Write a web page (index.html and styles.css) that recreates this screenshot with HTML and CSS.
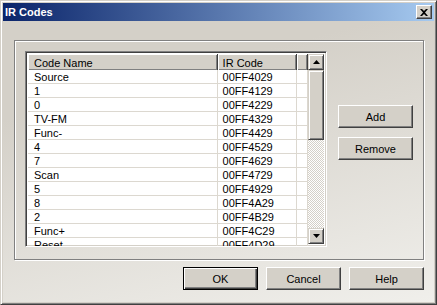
FILE: index.html
```html
<!DOCTYPE html>
<html lang="en">
<head>
    <meta charset="UTF-8">
    <title>IR Codes</title>
    <link rel="stylesheet" href="styles.css">
</head>
<body>
    <div class="window">
        <div class="titlebar">
            <span class="title">IR Codes</span>
            <button class="close" aria-label="Close">
                <svg width="8" height="7" viewBox="0 0 8 7"><path d="M0 0h2l2 2 2-2h2L5 3.5 8 7H6L4 5 2 7H0l3-3.5z" fill="#000"/></svg>
            </button>
        </div>
        <div class="client">
            <div class="frame">
                <div class="listbox">
                    <div class="grid">
                        <div class="head">
                            <div class="hcell c1">Code Name</div>
                            <div class="hcell c2">IR Code</div>
                            <div class="hcell c3"></div>
                        </div>
                        <div class="row"><div class="cell c1">Source</div><div class="cell c2">00FF4029</div><div class="cell c3"></div></div>
                        <div class="row"><div class="cell c1">1</div><div class="cell c2">00FF4129</div><div class="cell c3"></div></div>
                        <div class="row"><div class="cell c1">0</div><div class="cell c2">00FF4229</div><div class="cell c3"></div></div>
                        <div class="row"><div class="cell c1">TV-FM</div><div class="cell c2">00FF4329</div><div class="cell c3"></div></div>
                        <div class="row"><div class="cell c1">Func-</div><div class="cell c2">00FF4429</div><div class="cell c3"></div></div>
                        <div class="row"><div class="cell c1">4</div><div class="cell c2">00FF4529</div><div class="cell c3"></div></div>
                        <div class="row"><div class="cell c1">7</div><div class="cell c2">00FF4629</div><div class="cell c3"></div></div>
                        <div class="row"><div class="cell c1">Scan</div><div class="cell c2">00FF4729</div><div class="cell c3"></div></div>
                        <div class="row"><div class="cell c1">5</div><div class="cell c2">00FF4929</div><div class="cell c3"></div></div>
                        <div class="row"><div class="cell c1">8</div><div class="cell c2">00FF4A29</div><div class="cell c3"></div></div>
                        <div class="row"><div class="cell c1">2</div><div class="cell c2">00FF4B29</div><div class="cell c3"></div></div>
                        <div class="row"><div class="cell c1">Func+</div><div class="cell c2">00FF4C29</div><div class="cell c3"></div></div>
                        <div class="row"><div class="cell c1">Reset</div><div class="cell c2">00FF4D29</div><div class="cell c3"></div></div>
                    </div>
                    <div class="scrollbar">
                        <div class="sbtn">
                            <svg width="7" height="4" viewBox="0 0 7 4"><path d="M3.5 0L7 4H0z" fill="#000"/></svg>
                        </div>
                        <div class="thumb"></div>
                        <div class="track"></div>
                        <div class="sbtn">
                            <svg width="7" height="4" viewBox="0 0 7 4"><path d="M0 0h7L3.5 4z" fill="#000"/></svg>
                        </div>
                    </div>
                </div>
                <div class="side">
                    <button class="btn">Add</button>
                    <button class="btn">Remove</button>
                </div>
            </div>
            <div class="footer">
                <button class="btn default">OK</button>
                <button class="btn">Cancel</button>
                <button class="btn">Help</button>
            </div>
        </div>
    </div>
</body>
</html>
```

FILE: styles.css
```css
body {
    margin: 0;
    font-family: 'Liberation Sans', Arial, sans-serif;
    font-size: 11px;
    color: #000;
    background: #d4d0c8;
}
.window {
    width: 437px;
    height: 305px;
    box-sizing: border-box;
    border: 1px solid;
    border-color: #d4d0c8 #404040 #404040 #d4d0c8;
    box-shadow: inset 1px 1px #fff, inset -1px -1px #808080;
    padding: 2px 2px 2px 2px;
    display: flex;
    flex-direction: column;
}
.titlebar {
    height: 18px;
    background: linear-gradient(to right, #0a246a, #a6caf0);
    display: flex;
    align-items: center;
    justify-content: space-between;
    padding: 0 2px 0 2px;
}
.title {
    color: #fff;
    font-weight: bold;
    font-size: 11px;
}
.close {
    width: 16px;
    height: 14px;
    padding: 0;
    box-sizing: border-box;
    background: #d4d0c8;
    border: 1px solid;
    border-color: #fff #404040 #404040 #fff;
    box-shadow: inset -1px -1px #808080;
    display: flex;
    align-items: center;
    justify-content: center;
}
.client {
    flex: 1;
    background: linear-gradient(165deg, #d4d0c8 25%, #f0efeb 100%);
    padding: 19px 10px 0 11px;
}
.frame {
    height: 220px;
    box-sizing: border-box;
    border: 1px solid #808080;
    box-shadow: inset 1px 1px #fff, 1px 1px #fff;
    padding: 10px 9px 0 10px;
    display: flex;
}
.listbox {
    width: 302px;
    height: 196px;
    box-sizing: border-box;
    border: 1px solid;
    border-color: #808080 #fff #fff #808080;
    box-shadow: inset 1px 1px #404040, inset -1px -1px #d4d0c8;
    padding: 2px;
    display: flex;
    background: #fff;
}
.grid {
    width: 282px;
    height: 192px;
    overflow: hidden;
}
.head, .row {
    display: flex;
}
.hcell {
    height: 16px;
    box-sizing: border-box;
    background: #d4d0c8;
    border-right: 1px solid #404040;
    box-shadow: inset 1px 1px #fff, inset -1px -1px #808080;
    padding: 3px 0 0 6px;
    line-height: 12px;
}
.c1 { width: 191px; }
.c2 { width: 80px; }
.c3 { width: 11px; }
.hcell.c2 { padding-left: 5px; }
.cell {
    height: 14px;
    box-sizing: border-box;
    border-right: 1px solid #dcd8d0;
    border-bottom: 1px solid #dcd8d0;
    padding: 1px 0 0 6px;
    line-height: 12px;
}
.cell.c2 { padding-left: 5px; }
.scrollbar {
    width: 16px;
    display: flex;
    flex-direction: column;
}
.sbtn, .thumb {
    width: 16px;
    box-sizing: border-box;
    background: #d4d0c8;
    border: 1px solid;
    border-color: #d4d0c8 #404040 #404040 #d4d0c8;
    box-shadow: inset 1px 1px #fff, inset -1px -1px #808080;
}
.sbtn {
    height: 16px;
    display: flex;
    align-items: center;
    justify-content: center;
}
.thumb {
    height: 70px;
}
.track {
    flex: 1;
    background: conic-gradient(#fff 25%, #d4d0c8 0 50%, #fff 0 75%, #d4d0c8 0) 0 0 / 2px 2px;
}
.side {
    display: flex;
    flex-direction: column;
    gap: 9px;
    padding: 54px 0 0 11px;
}
.btn {
    width: 75px;
    height: 23px;
    box-sizing: border-box;
    font-family: 'Liberation Sans', Arial, sans-serif;
    font-size: 11px;
    color: #000;
    background: #d4d0c8;
    border: 1px solid;
    border-color: #fff #404040 #404040 #fff;
    box-shadow: inset -1px -1px #808080;
    padding: 0;
}
.btn.default {
    border: 1px solid #000;
    box-shadow: inset 1px 1px #fff, inset -1px -1px #404040, inset -2px -2px #808080;
}
.footer {
    display: flex;
    justify-content: flex-end;
    gap: 8px;
    padding-top: 7px;
}
```
